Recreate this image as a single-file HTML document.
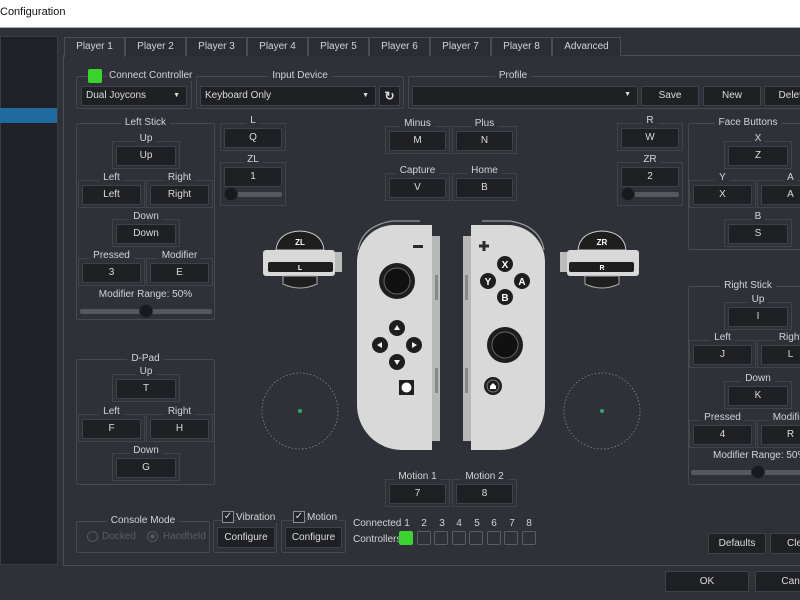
<!DOCTYPE html>
<html><head><meta charset="utf-8"><style>
body{margin:0;width:800px;height:600px;overflow:hidden;background:#2e3138;font-family:"Liberation Sans",sans-serif;font-size:10px;color:#d4d4d4;position:relative}
div{box-sizing:border-box}
.a{position:absolute}
.g{position:absolute;border:1px solid #464950;border-radius:2px}
.gl{position:absolute;top:-7px;left:0;right:0;text-align:center;line-height:12px;height:12px}
.gl span{background:#2e3138;padding:0 4px}
.b{position:absolute;background:#1e2024;border:1px solid #3f424a;text-align:center;color:#dcdcdc;border-radius:1px}
.sg{position:absolute;border:1px solid #41444b}
.sg .gl{top:-9px}
.sg .b{left:3px;top:4px;right:3px;height:20px;line-height:18px}
.tab{position:absolute;top:37px;height:19px;border:1px solid #4a4d55;border-bottom:none;text-align:center;line-height:18px;background:#2a2d33}
.trk{position:absolute;height:5px;background:#55585f;border-radius:2px}
.th{position:absolute;width:14px;height:14px;border-radius:7px;background:#17191c;border:1px solid #2a2c30}
.cb{position:absolute;width:12px;height:12px;border:1px solid #8a8d93;background:#23252a;color:#ddd;font-size:10px;line-height:10px;text-align:center}
.cc{position:absolute;top:531px;width:14px;height:14px;border:1px solid #5a5d64;border-radius:2px}
.n{position:absolute;top:518px;width:10px;text-align:center}
</style></head><body>
<div class="a" style="left:0;top:0;width:800px;height:28px;background:#fff;border-bottom:1px solid #aaa"></div>
<div class="a" style="left:0;top:6px;color:#111;font-size:11px">Configuration</div>
<div class="a" style="left:0;top:36px;width:58px;height:529px;background:#1f2126;border:1px solid #3a3d44"></div>
<div class="a" style="left:0;top:108px;width:57px;height:15px;background:#1f6aa0"></div>

<div class="a" style="left:63px;top:55px;width:745px;height:511px;border:1px solid #4a4d55"></div>
<div class="tab" style="left:64px;width:61px;background:#2e3138;height:20px">Player 1</div>
<div class="tab" style="left:125px;width:61px">Player 2</div>
<div class="tab" style="left:186px;width:61px">Player 3</div>
<div class="tab" style="left:247px;width:61px">Player 4</div>
<div class="tab" style="left:308px;width:61px">Player 5</div>
<div class="tab" style="left:369px;width:61px">Player 6</div>
<div class="tab" style="left:430px;width:61px">Player 7</div>
<div class="tab" style="left:491px;width:61px">Player 8</div>
<div class="tab" style="left:552px;width:69px">Advanced</div>

<div class="g" style="left:76px;top:76px;width:116px;height:33px"></div>
<div class="a" style="left:88px;top:69px;width:14px;height:14px;background:#3bd42f;border-radius:2px"></div>
<div class="a" style="left:107px;top:70px;background:#2e3138;padding:0 2px">Connect Controller</div>
<div class="b" style="left:81px;top:86px;width:106px;height:20px;line-height:18px;text-align:left;padding-left:4px">Dual Joycons<span style="position:absolute;right:6px;font-size:7px">▼</span></div>
<div class="g" style="left:196px;top:76px;width:208px;height:33px"><div class="gl"><span>Input Device</span></div></div>
<div class="b" style="left:200px;top:86px;width:176px;height:20px;line-height:18px;text-align:left;padding-left:4px">Keyboard Only<span style="position:absolute;right:6px;font-size:7px">▼</span></div>
<div class="b" style="left:379px;top:86px;width:21px;height:20px;line-height:18px;font-size:12px;font-weight:bold">↻</div>
<div class="g" style="left:408px;top:76px;width:400px;height:33px"><div class="gl" style="right:190px"><span>Profile</span></div></div>
<div class="b" style="left:412px;top:86px;width:226px;height:20px"><span style="position:absolute;right:6px;top:4px;font-size:7px">▼</span></div>
<div class="b" style="left:641px;top:86px;width:58px;height:20px;line-height:18px">Save</div>
<div class="b" style="left:703px;top:86px;width:58px;height:20px;line-height:18px">New</div>
<div class="b" style="left:764px;top:86px;width:58px;height:20px;line-height:18px">Delete</div>

<div class="g" style="left:76px;top:123px;width:139px;height:197px"><div class="gl"><span>Left Stick</span></div></div>
<div class="sg" style="left:112px;top:141px;width:68px;height:28px"><div class="gl"><span>Up</span></div><div class="b">Up</div></div>
<div class="sg" style="left:78px;top:180px;width:67px;height:28px"><div class="gl"><span>Left</span></div><div class="b">Left</div></div>
<div class="sg" style="left:146px;top:180px;width:67px;height:28px"><div class="gl"><span>Right</span></div><div class="b">Right</div></div>
<div class="sg" style="left:112px;top:219px;width:68px;height:28px"><div class="gl"><span>Down</span></div><div class="b">Down</div></div>
<div class="sg" style="left:78px;top:258px;width:67px;height:28px"><div class="gl"><span>Pressed</span></div><div class="b">3</div></div>
<div class="sg" style="left:146px;top:258px;width:67px;height:28px"><div class="gl"><span>Modifier</span></div><div class="b">E</div></div>
<div class="a" style="left:76px;top:289px;width:139px;text-align:center">Modifier Range: 50%</div>
<div class="trk" style="left:80px;top:309px;width:132px"></div><div class="th" style="left:139px;top:304px"></div>

<div class="g" style="left:76px;top:359px;width:139px;height:126px"><div class="gl"><span>D-Pad</span></div></div>
<div class="sg" style="left:112px;top:374px;width:68px;height:28px"><div class="gl"><span>Up</span></div><div class="b">T</div></div>
<div class="sg" style="left:78px;top:414px;width:67px;height:28px"><div class="gl"><span>Left</span></div><div class="b">F</div></div>
<div class="sg" style="left:146px;top:414px;width:67px;height:28px"><div class="gl"><span>Right</span></div><div class="b">H</div></div>
<div class="sg" style="left:112px;top:453px;width:68px;height:28px"><div class="gl"><span>Down</span></div><div class="b">G</div></div>

<div class="sg" style="left:220px;top:123px;width:66px;height:28px"><div class="gl"><span>L</span></div><div class="b">Q</div></div>
<div class="sg" style="left:220px;top:162px;width:66px;height:44px"><div class="gl"><span>ZL</span></div><div class="b">1</div></div>
<div class="trk" style="left:228px;top:192px;width:54px"></div><div class="th" style="left:224px;top:187px"></div>
<div class="sg" style="left:617px;top:123px;width:66px;height:28px"><div class="gl"><span>R</span></div><div class="b">W</div></div>
<div class="sg" style="left:617px;top:162px;width:66px;height:44px"><div class="gl"><span>ZR</span></div><div class="b">2</div></div>
<div class="trk" style="left:625px;top:192px;width:54px"></div><div class="th" style="left:621px;top:187px"></div>

<div class="sg" style="left:385px;top:126px;width:65px;height:28px"><div class="gl"><span>Minus</span></div><div class="b">M</div></div>
<div class="sg" style="left:452px;top:126px;width:65px;height:28px"><div class="gl"><span>Plus</span></div><div class="b">N</div></div>
<div class="sg" style="left:385px;top:173px;width:65px;height:28px"><div class="gl"><span>Capture</span></div><div class="b">V</div></div>
<div class="sg" style="left:452px;top:173px;width:65px;height:28px"><div class="gl"><span>Home</span></div><div class="b">B</div></div>

<div class="g" style="left:688px;top:123px;width:130px;height:127px"><div class="gl" style="right:10px"><span>Face Buttons</span></div></div>
<div class="sg" style="left:724px;top:141px;width:68px;height:28px"><div class="gl"><span>X</span></div><div class="b">Z</div></div>
<div class="sg" style="left:689px;top:180px;width:67px;height:28px"><div class="gl"><span>Y</span></div><div class="b">X</div></div>
<div class="sg" style="left:757px;top:180px;width:67px;height:28px"><div class="gl"><span>A</span></div><div class="b">A</div></div>
<div class="sg" style="left:724px;top:219px;width:68px;height:28px"><div class="gl"><span>B</span></div><div class="b">S</div></div>

<div class="g" style="left:688px;top:286px;width:130px;height:199px"><div class="gl" style="right:10px"><span>Right Stick</span></div></div>
<div class="sg" style="left:724px;top:302px;width:68px;height:28px"><div class="gl"><span>Up</span></div><div class="b">I</div></div>
<div class="sg" style="left:689px;top:340px;width:67px;height:28px"><div class="gl"><span>Left</span></div><div class="b">J</div></div>
<div class="sg" style="left:757px;top:340px;width:67px;height:28px"><div class="gl"><span>Right</span></div><div class="b">L</div></div>
<div class="sg" style="left:724px;top:381px;width:68px;height:28px"><div class="gl"><span>Down</span></div><div class="b">K</div></div>
<div class="sg" style="left:689px;top:420px;width:67px;height:28px"><div class="gl"><span>Pressed</span></div><div class="b">4</div></div>
<div class="sg" style="left:757px;top:420px;width:67px;height:28px"><div class="gl"><span>Modifier</span></div><div class="b">R</div></div>
<div class="a" style="left:713px;top:450px;white-space:nowrap">Modifier Range: 50%</div>
<div class="trk" style="left:691px;top:470px;width:120px"></div><div class="th" style="left:751px;top:465px"></div>

<div class="sg" style="left:385px;top:479px;width:65px;height:28px"><div class="gl"><span>Motion 1</span></div><div class="b">7</div></div>
<div class="sg" style="left:452px;top:479px;width:65px;height:28px"><div class="gl"><span>Motion 2</span></div><div class="b">8</div></div>

<div class="g" style="left:76px;top:521px;width:134px;height:32px"><div class="gl"><span>Console Mode</span></div></div>
<div class="a" style="left:87px;top:531px;width:11px;height:11px;border:1px solid #55585e;border-radius:6px"></div>
<div class="a" style="left:102px;top:531px;color:#5a5d63">Docked</div>
<div class="a" style="left:147px;top:531px;width:11px;height:11px;border:1px solid #55585e;border-radius:6px;background:radial-gradient(#55585e 30%,transparent 40%)"></div>
<div class="a" style="left:163px;top:531px;color:#5a5d63">Handheld</div>
<div class="g" style="left:213px;top:520px;width:64px;height:33px"></div>
<div class="cb" style="left:222px;top:511px">✓</div><div class="a" style="left:236px;top:512px;background:#2e3138;padding-right:2px">Vibration</div>
<div class="b" style="left:217px;top:527px;width:58px;height:21px;line-height:19px">Configure</div>
<div class="g" style="left:281px;top:520px;width:65px;height:33px"></div>
<div class="cb" style="left:293px;top:511px">✓</div><div class="a" style="left:307px;top:512px;background:#2e3138;padding-right:2px">Motion</div>
<div class="b" style="left:285px;top:527px;width:57px;height:21px;line-height:19px">Configure</div>
<div class="a" style="left:353px;top:518px">Connected</div>
<div class="a" style="left:353px;top:534px">Controllers</div>
<div class="n" style="left:402px">1</div><div class="n" style="left:419px">2</div><div class="n" style="left:437px">3</div><div class="n" style="left:454px">4</div>
<div class="n" style="left:472px">5</div><div class="n" style="left:489px">6</div><div class="n" style="left:507px">7</div><div class="n" style="left:524px">8</div>
<div class="cc" style="left:399px;background:#3bd42f;border-color:#3bd42f"></div>
<div class="cc" style="left:417px"></div><div class="cc" style="left:434px"></div><div class="cc" style="left:452px"></div>
<div class="cc" style="left:469px"></div><div class="cc" style="left:487px"></div><div class="cc" style="left:504px"></div><div class="cc" style="left:522px"></div>
<div class="b" style="left:708px;top:533px;width:58px;height:21px;line-height:19px">Defaults</div>
<div class="b" style="left:770px;top:533px;width:58px;height:21px;line-height:19px">Clear</div>
<div class="b" style="left:665px;top:571px;width:84px;height:21px;line-height:19px">OK</div>
<div class="b" style="left:755px;top:571px;width:84px;height:21px;line-height:19px">Cancel</div>

<svg class="a" style="left:0;top:0" width="800" height="600" viewBox="0 0 800 600">
<g font-family="Liberation Sans" font-weight="bold">
<path d="M358,250 Q362,226 392,221 L420,221" fill="none" stroke="#999" stroke-width="1.2"/>
<path d="M544,250 Q540,226 510,221 L482,221" fill="none" stroke="#999" stroke-width="1.2"/>
<path d="M432,225 L394,225 A37,37 0 0 0 357,262 L357,405 A45,45 0 0 0 402,450 L432,450 Z" fill="#d9d9d9"/>
<rect x="432" y="236" width="8" height="205" fill="#b8b8b8"/>
<rect x="435" y="275" width="3" height="25" fill="#888"/><rect x="435" y="368" width="3" height="25" fill="#888"/>
<rect x="413" y="245" width="10" height="3" fill="#2a2a2a"/>
<circle cx="397" cy="281" r="18" fill="#1e1e1e"/><circle cx="397" cy="281" r="13" fill="#111" stroke="#666" stroke-width="1"/>
<g fill="#1e1e1e"><circle cx="397" cy="328" r="8"/><circle cx="397" cy="362" r="8"/><circle cx="380" cy="345" r="8"/><circle cx="414" cy="345" r="8"/></g>
<g fill="#eee"><path d="M394,330 L400,330 L397,325Z"/><path d="M394,360 L400,360 L397,365Z"/><path d="M382,342 L382,348 L377,345Z"/><path d="M412,342 L412,348 L417,345Z"/></g>
<rect x="399" y="380" width="15" height="15" fill="#1e1e1e"/><circle cx="406.5" cy="387.5" r="5" fill="#fff"/>
<path d="M471,225 L508,225 A37,37 0 0 1 545,262 L545,405 A45,45 0 0 1 500,450 L471,450 Z" fill="#d9d9d9"/>
<rect x="463" y="236" width="8" height="205" fill="#b8b8b8"/>
<rect x="465" y="275" width="3" height="25" fill="#888"/><rect x="465" y="368" width="3" height="25" fill="#888"/>
<path d="M479,246 h10 M484,241 v10" stroke="#2a2a2a" stroke-width="3"/>
<g fill="#1e1e1e"><circle cx="505" cy="264" r="8"/><circle cx="488" cy="281" r="8"/><circle cx="522" cy="281" r="8"/><circle cx="505" cy="297" r="8"/></g>
<g fill="#fff" font-size="10" text-anchor="middle"><text x="505" y="268">X</text><text x="488" y="285">Y</text><text x="522" y="285">A</text><text x="505" y="301">B</text></g>
<circle cx="505" cy="345" r="18" fill="#1e1e1e"/><circle cx="505" cy="345" r="13" fill="#111" stroke="#666" stroke-width="1"/>
<circle cx="493" cy="386" r="9" fill="#1e1e1e"/><circle cx="493" cy="386" r="6" fill="none" stroke="#777"/><path d="M490,389 v-3 l3,-3 l3,3 v3 z" fill="#fff"/>
<path d="M276,250 Q278,232 300,231 Q322,232 324,250 Z" fill="#1e1e1e" stroke="#ccc"/>
<text x="300" y="245" fill="#fff" font-size="8" text-anchor="middle">ZL</text>
<rect x="263" y="250" width="72" height="26" rx="3" fill="#d9d9d9"/>
<rect x="268" y="262" width="65" height="10" rx="2" fill="#1e1e1e"/>
<text x="300" y="270" fill="#fff" font-size="7" text-anchor="middle">L</text>
<rect x="335" y="252" width="7" height="20" fill="#bbb"/>
<path d="M283,276 h34 v8 q-17,8 -34,0z" fill="#1e1e1e" stroke="#aaa"/>
<path d="M578,250 Q580,232 602,231 Q624,232 626,250 Z" fill="#1e1e1e" stroke="#ccc"/>
<text x="602" y="245" fill="#fff" font-size="8" text-anchor="middle">ZR</text>
<rect x="567" y="250" width="72" height="26" rx="3" fill="#d9d9d9"/>
<rect x="569" y="262" width="65" height="10" rx="2" fill="#1e1e1e"/>
<text x="602" y="270" fill="#fff" font-size="7" text-anchor="middle">R</text>
<rect x="560" y="252" width="7" height="20" fill="#bbb"/>
<path d="M585,276 h34 v8 q-17,8 -34,0z" fill="#1e1e1e" stroke="#aaa"/>
</g>
<circle cx="300" cy="411" r="38" fill="none" stroke="#888" stroke-width="0.8" stroke-dasharray="1.5 2"/>
<circle cx="300" cy="411" r="2" fill="#2fa870"/>
<circle cx="602" cy="411" r="38" fill="none" stroke="#888" stroke-width="0.8" stroke-dasharray="1.5 2"/>
<circle cx="602" cy="411" r="2" fill="#2fa870"/>
</svg>
</body></html>
